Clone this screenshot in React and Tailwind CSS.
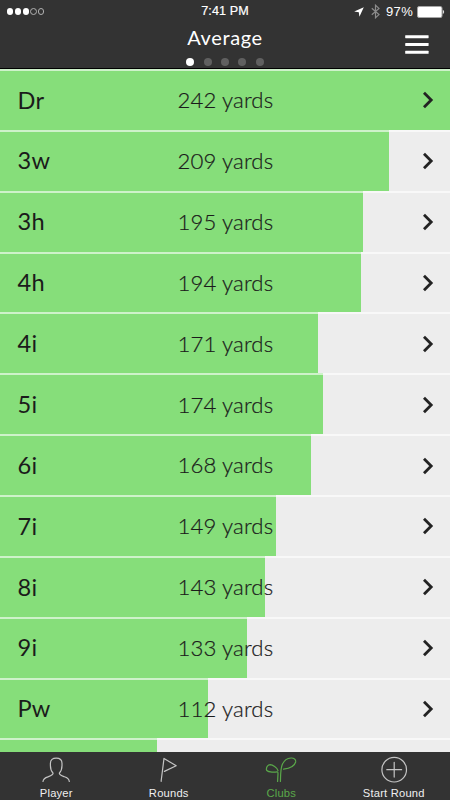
import React from "react";

const clubs = [
  { name: "Dr", yards: 242, bar: 450 },
  { name: "3w", yards: 209, bar: 389 },
  { name: "3h", yards: 195, bar: 363 },
  { name: "4h", yards: 194, bar: 361 },
  { name: "4i", yards: 171, bar: 318.4 },
  { name: "5i", yards: 174, bar: 323.4 },
  { name: "6i", yards: 168, bar: 311.4 },
  { name: "7i", yards: 149, bar: 276.4 },
  { name: "8i", yards: 143, bar: 265 },
  { name: "9i", yards: 133, bar: 247.4 },
  { name: "Pw", yards: 112, bar: 208 },
  { name: "", yards: null, bar: 157 },
];

function StatusBar() {
  return (
    <div className="grid h-[23px] grid-cols-3 items-center pl-[7px] pr-[5px] font-['Liberation_Sans',sans-serif] text-white">
      <div className="flex gap-[1.6px]">
        {[0, 1, 2, 3, 4].map((i) => (
          <span
            key={i}
            className={
              i < 3
                ? "size-[6.2px] rounded-full bg-white"
                : "size-[6.2px] rounded-full border-[0.7px] border-[#b0b0b0]"
            }
          />
        ))}
      </div>
      <div className="-ml-[2px] whitespace-nowrap text-center text-[12.6px] leading-none tracking-[0.1px] [-webkit-text-stroke:0.2px_white]">
        7:41 PM
      </div>
      <div className="flex items-center justify-end">
        <svg className="mr-[7px] h-[10px] w-[10px] shrink-0" viewBox="0 0 10 10">
          <path d="M9.8 0.2L0.2 4.6L4.8 5.2L5.4 9.8Z" fill="#fff" />
        </svg>
        <svg className="mr-[6px] h-[15px] w-[9px] shrink-0" viewBox="0 0 9 15" fill="none" stroke="#8c8c8c" strokeWidth="1.2">
          <path d="M0.8 4.2L8 10.6L4.5 13.8V1.2L8 4.4L0.8 10.8" />
        </svg>
        <span className="mr-[4px] text-[13px] leading-none tracking-[0.3px]">97%</span>
        <svg className="h-[12px] w-[28px] shrink-0" viewBox="0 0 28 12">
          <rect x="0.5" y="0.5" width="24.5" height="11" rx="1.6" fill="#fff" stroke="#a5a5a5" />
          <path d="M25.8 3.8Q28.6 6 25.8 8.2Z" fill="#ddd" />
        </svg>
      </div>
    </div>
  );
}

function Header() {
  return (
    <header className="h-[69px] shrink-0 border-b border-black bg-[#333]">
      <StatusBar />
      <div className="grid h-[45px] grid-cols-[1fr_auto_1fr]">
        <div />
        <div className="flex flex-col items-center">
          <h1 className="h-[26px] text-[20px] leading-[28px] tracking-[0.6px] text-white">Average</h1>
          <div className="mt-[9px] flex gap-[9.6px]">
            {[0, 1, 2, 3, 4].map((i) => (
              <span
                key={i}
                className={i === 0 ? "size-[7.8px] rounded-full bg-white" : "size-[7.8px] rounded-full bg-[#606060]"}
              />
            ))}
          </div>
        </div>
        <button className="mt-[12px] mr-[21px] h-[19px] w-[24px] justify-self-end">
          <svg className="block h-[19px] w-[24px]" viewBox="0 0 24 19" fill="#fff">
            <rect x="0.2" y="0.2" width="23.4" height="3" rx="0.4" />
            <rect x="0.2" y="8" width="23.4" height="3" rx="0.4" />
            <rect x="0.2" y="15.8" width="23.4" height="3" rx="0.4" />
          </svg>
        </button>
      </div>
    </header>
  );
}

function ClubRow({ club }) {
  return (
    <li className="grid h-[60.87px] shrink-0 bg-[#ededed]">
      <div className="col-start-1 row-start-1 h-full bg-[#86de7a]" style={{ width: club.bar }} />
      <div className="col-start-1 row-start-1 h-[2px] bg-white/60" />
      {club.name && (
        <div className="col-start-1 row-start-1 grid grid-cols-[1fr_auto_1fr] items-center pt-[2px] pr-[16.5px] pl-[17.5px] text-[#1b1b1b]">
          <span className="text-[23.6px] leading-none tracking-[0.2px]">{club.name}</span>
          <span className="w-[96px] whitespace-nowrap text-[22.2px] leading-none font-light tracking-[0.12px] [-webkit-text-stroke:0.2px_#1b1b1b]">
            {club.yards} yards
          </span>
          <svg className="h-[18px] w-[12px] justify-self-end" viewBox="0 0 12 18" fill="none" stroke="#222" strokeWidth="2.8">
            <path d="M2 1.7L9.2 9L2 16.3" />
          </svg>
        </div>
      )}
    </li>
  );
}

function Tab({ label, active, children }) {
  return (
    <div className={active ? "flex flex-1 flex-col items-center text-[#5aa84a]" : "flex flex-1 flex-col items-center text-[#efefef]"}>
      <svg
        className={active ? "mt-[4px] h-[28px] w-[32px]" : "mt-[4px] h-[28px] w-[32px] text-[#c4c4c4]"}
        viewBox="0 0 32 28"
        fill="none"
        stroke="currentColor"
        strokeWidth="1.2"
        strokeLinecap="round"
        strokeLinejoin="round"
      >
        {children}
      </svg>
      <span className="mt-[3px] text-[11.2px] leading-[12px] tracking-[0.2px]">{label}</span>
    </div>
  );
}

export default function App() {
  return (
    <div className="flex h-[800px] w-[450px] flex-col overflow-hidden bg-[#ededed] font-['Lato',sans-serif]">
      <Header />
      <ul className="flex min-h-0 flex-1 flex-col overflow-hidden">
        {clubs.map((club, i) => (
          <ClubRow key={i} club={club} />
        ))}
      </ul>
      <nav className="flex h-[48px] shrink-0 bg-[#333] font-['Liberation_Sans',sans-serif]">
        <Tab label="Player">
          <path d="M3 25.5C3.3 22.5 5.2 21.6 8 20.8C11 19.9 13.1 19.4 13.1 17.1C11.2 15.2 10.4 12.8 10.4 9.5V7.2C10.4 3.8 12.7 2.1 16.2 2.1S22 3.8 22 7.2V9.5C22 12.8 21.2 15.2 19.3 17.1C19.3 19.4 21.4 19.9 24.4 20.8C27.2 21.6 29 22.5 29.3 25.5" />
        </Tab>
        <Tab label="Rounds">
          <path d="M8.1 25.3L11 2.4L23.2 9.8L11.4 15.4" />
        </Tab>
        <Tab label="Clubs" active>
          <path d="M12.6 25.5L13 17.5C13 16.4 12.8 15.8 12 15.9C8.5 16.3 1.7 16.3 1.4 13.6C1.2 11 3 8.6 5.2 8.6C7.4 8.7 12.2 11.6 13 14.6M15.4 25.5C15.7 21 15.3 14.5 17 9.3C18.7 4.6 22.5 2.2 26 2C28.8 1.8 31.2 3.3 30.6 6C29.6 10 24.5 12.4 18.6 13.2" />
        </Tab>
        <Tab label="Start Round">
          <circle cx="16.2" cy="13.7" r="12.3" />
          <path d="M16.2 6.3V21.1M8.8 13.7H23.6" />
        </Tab>
      </nav>
    </div>
  );
}
